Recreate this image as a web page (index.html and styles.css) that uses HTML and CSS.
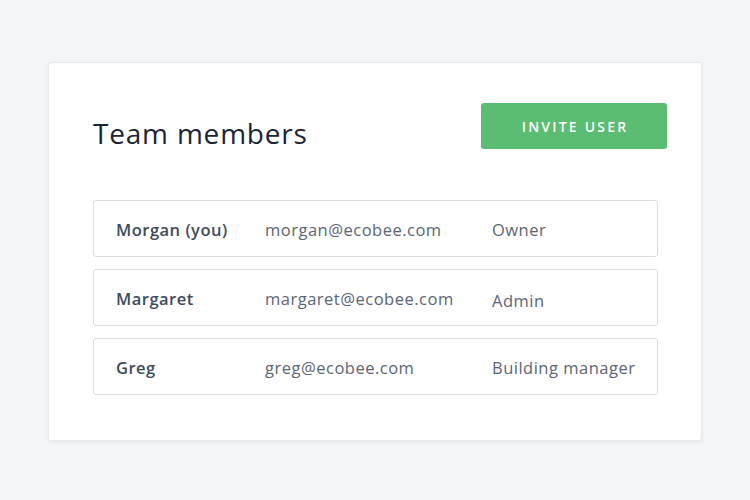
FILE: index.html
```html
<!DOCTYPE html>
<html>
<head>
<meta charset="utf-8">
<link rel="stylesheet" href="styles.css">
</head>
<body>
<main class="card">
  <header class="card-header">
    <h1 class="title">Team members</h1>
    <button class="invite-btn">INVITE USER</button>
  </header>
  <ul class="members">
    <li class="member">
      <span class="name">Morgan (you)</span>
      <span class="email">morgan@ecobee.com</span>
      <span class="role">Owner</span>
    </li>
    <li class="member">
      <span class="name">Margaret</span>
      <span class="email">margaret@ecobee.com</span>
      <span class="role role-low">Admin</span>
    </li>
    <li class="member">
      <span class="name">Greg</span>
      <span class="email">greg@ecobee.com</span>
      <span class="role">Building manager</span>
    </li>
  </ul>
</main>
</body>
</html>
```
FILE: styles.css
```css
* { box-sizing: border-box; }
html, body { margin: 0; padding: 0; }
body {
  width: 750px;
  height: 500px;
  background: #f4f5f7;
  font-family: "Open Sans", "Noto Sans", sans-serif;
  padding: 62px 0 0 48px;
}
.card {
  width: 654px;
  height: 379px;
  background: #ffffff;
  border: 1px solid #e6e8ec;
  border-radius: 3px;
  box-shadow: 0 1px 4px rgba(30, 40, 60, 0.06);
  padding: 40px 34px 0 44px;
}
.card-header {
  height: 46px;
  display: flex;
  justify-content: space-between;
  align-items: flex-start;
}
.title {
  margin: 13px 0 0 0;
  font-size: 28px;
  line-height: 34px;
  font-weight: 400;
  letter-spacing: 0.8px;
  color: #1d2434;
}
.invite-btn {
  width: 186px;
  height: 46px;
  border: none;
  border-radius: 3px;
  background: #5bbd72;
  color: #ffffff;
  font-family: inherit;
  font-size: 14px;
  font-weight: 600;
  letter-spacing: 2.2px;
  padding: 0 0 0 2px;
}
.members {
  list-style: none;
  margin: 51px 0 0 0;
  padding: 0;
  width: 565px;
  display: flex;
  flex-direction: column;
  gap: 12px;
}
.member {
  height: 57px;
  border: 1px solid #d9dce1;
  border-radius: 3px;
  display: flex;
  align-items: center;
  padding: 2px 22px 0 22px;
  font-size: 16.5px;
  letter-spacing: 0.5px;
  color: #5b6574;
  white-space: nowrap;
}
.name {
  width: 149px;
  flex: none;
  font-weight: 600;
  color: #3e4b5d;
}
.email { width: 227px; flex: none; }
.role { flex: none; }
.role-low { position: relative; top: 2px; }
```
